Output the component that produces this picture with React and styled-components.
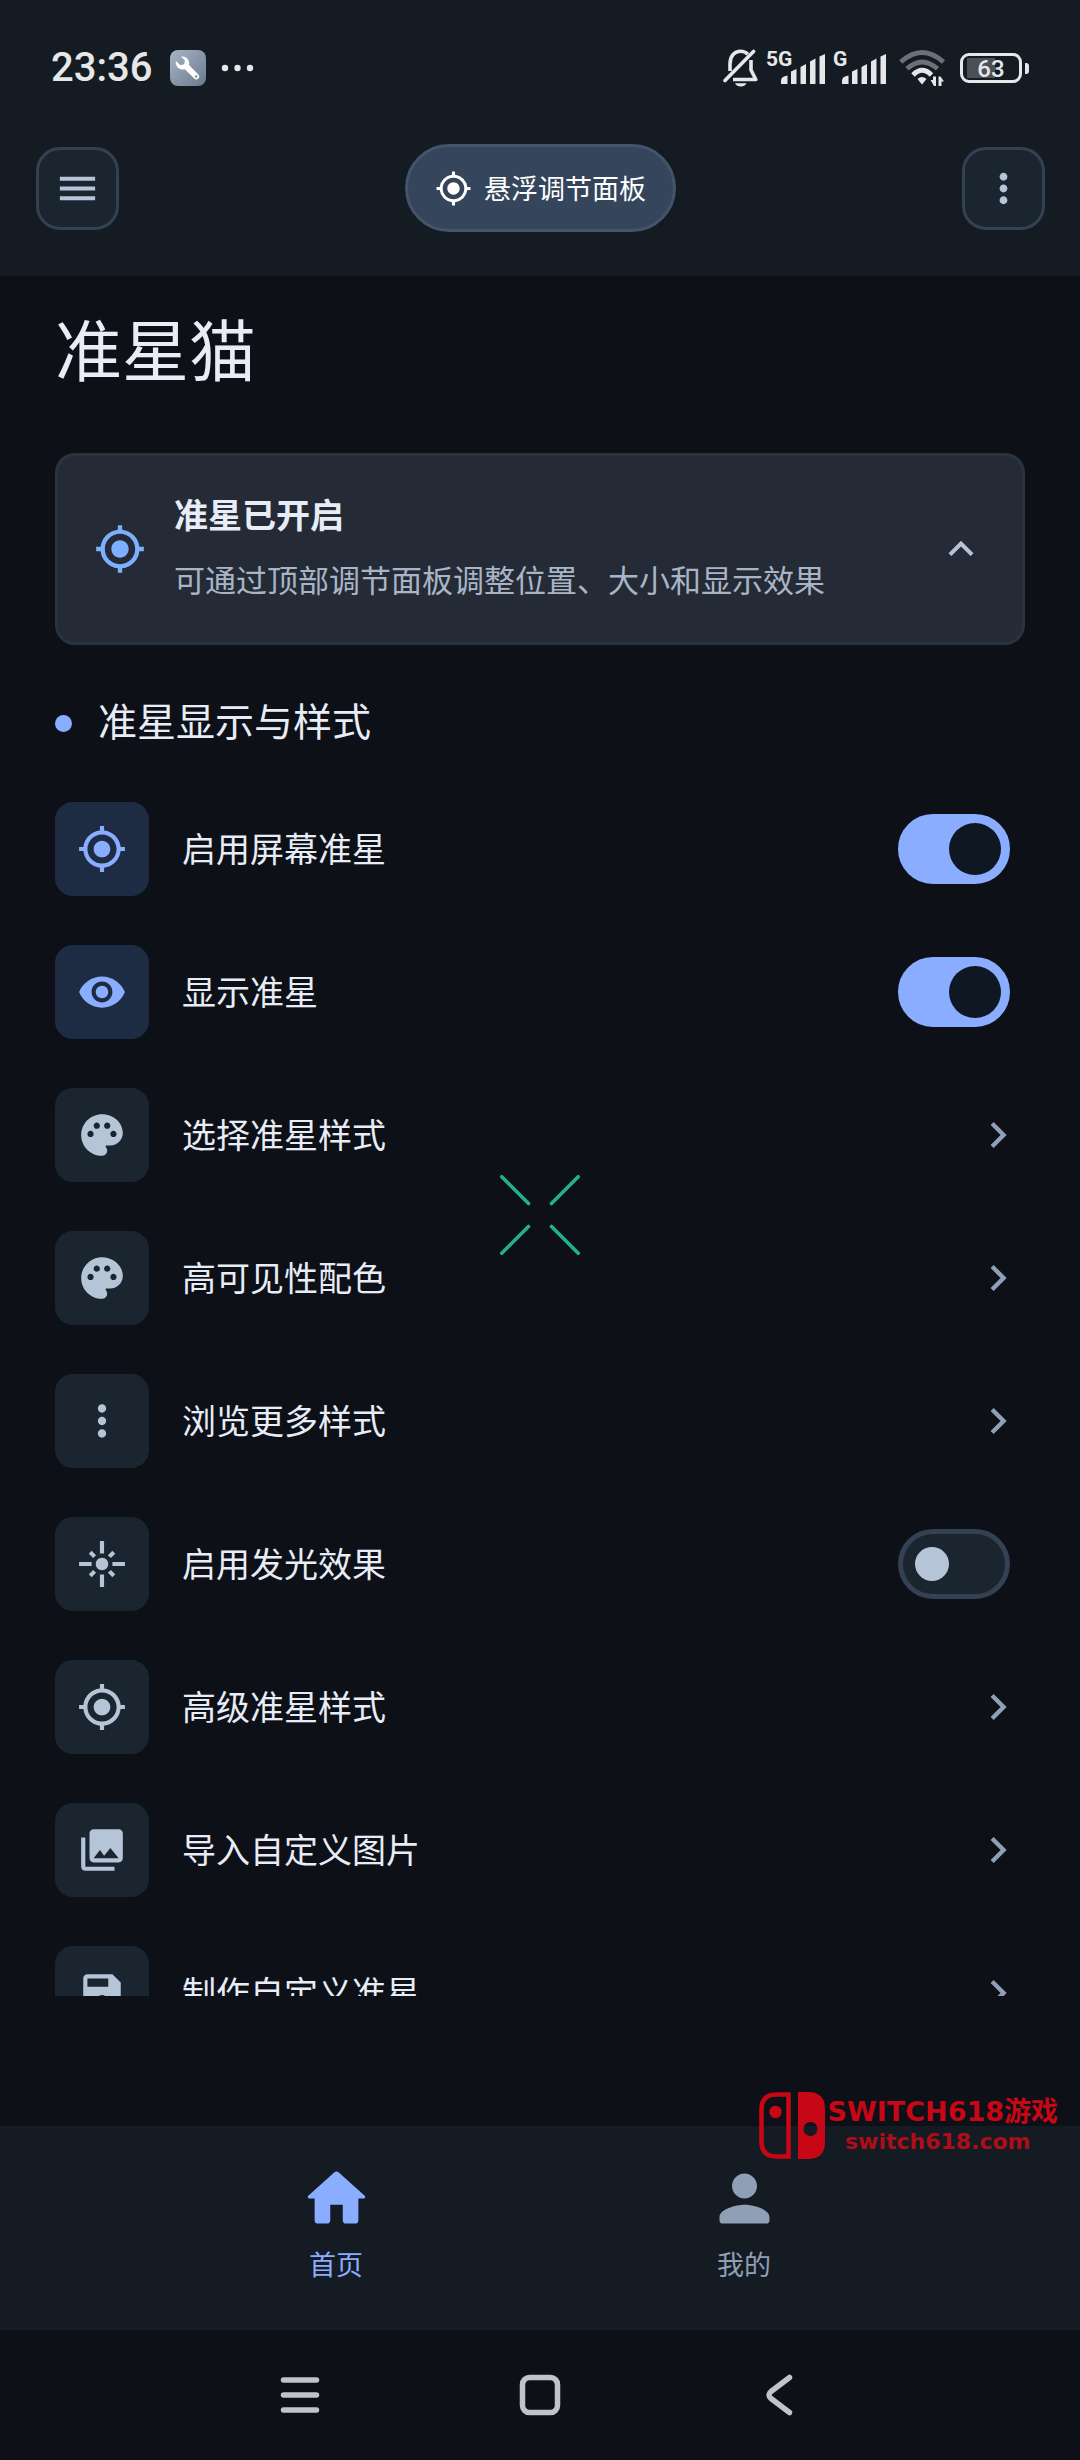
import React from 'react';
import styled, { createGlobalStyle } from 'styled-components';
import {
  MdChevronRight,
  MdExpandLess,
  MdFlare,
  MdMenu,
  MdMoreVert,
  MdMyLocation,
  MdPalette,
  MdPhotoLibrary,
  MdSave,
  MdVisibility,
} from 'react-icons/md';

// styles

const GlobalStyle = createGlobalStyle`
  :root {
    --bg: #0d1017;
    --bar: #151b22;
    --surface: #1b2530;
    --outline: #344153;
    --accent: #8aadff;
    --text: #e7ecf6;
    --text-soft: #b6c4d8;
    --text-dim: #8f9fb6;
    --system: #e6e7e9;
  }

  * {
    box-sizing: border-box;
  }

  body {
    margin: 0;
    background: var(--bg);
    color: var(--text);
    font-family: Roboto, 'Noto Sans CJK SC', sans-serif;
  }

  h1, h2, p {
    margin: 0;
    font-weight: 400;
  }

  button {
    margin: 0;
    padding: 0;
    border: none;
    background: none;
    color: inherit;
    font-family: inherit;
    cursor: pointer;
  }

  svg {
    display: block;
    flex-shrink: 0;
  }
`;

const Screen = styled.div`
  position: relative;
  display: flex;
  flex-direction: column;
  height: 100vh;
  overflow: hidden;
`;

const Header = styled.header`
  flex-shrink: 0;
  background: var(--bar);
`;

const StatusBar = styled.div`
  display: flex;
  align-items: center;
  justify-content: space-between;
  height: 136px;
  padding: 0 51px;
  color: var(--system);
`;

const StatusGroup = styled.div`
  display: flex;
  align-items: center;
  gap: ${(props) => props.$gap}px;
`;

const Clock = styled.time`
  font-size: 40px;
  font-weight: 500;
  line-height: 44px;
`;

const Battery = styled.div`
  display: flex;
  align-items: center;
  gap: 3px;

  &::after {
    content: '';
    width: 4px;
    height: 11px;
    border-radius: 0 3px 3px 0;
    background: var(--system);
  }
`;

const BatteryCell = styled.div`
  width: 62px;
  height: 30px;
  border: 3px solid var(--system);
  border-radius: 9px;
  background: linear-gradient(#4b4f56, #4b4f56) 4px 2px / 28px 20px no-repeat;
  font-size: 24px;
  font-weight: 500;
  line-height: 26px;
  text-align: center;
`;

const Toolbar = styled.div`
  display: flex;
  align-items: center;
  justify-content: space-between;
  padding: 8px 35px 44px 36px;
`;

const SquareButton = styled.button`
  display: flex;
  align-items: center;
  justify-content: center;
  width: 83px;
  height: 83px;
  border: 3px solid var(--outline);
  border-radius: 24px;
  background: var(--surface);
  color: var(--text-soft);
`;

const PanelButton = styled.button`
  display: flex;
  align-items: center;
  gap: 12px;
  height: 88px;
  padding: 0 27px;
  border: 3px solid #43546b;
  border-radius: 44px;
  background: #35455b;
  color: #fff;
  font-size: 27px;
  font-weight: 400;
  line-height: 36px;

  span {
    padding-top: 3px;
  }
`;

const Main = styled.main`
  display: flex;
  flex: 1;
  flex-direction: column;
  min-height: 0;
  padding: 39px 55px 130px;
`;

const Title = styled.h1`
  font-size: 67px;
  line-height: 76px;
`;

const StatusCard = styled.section`
  display: flex;
  align-items: center;
  gap: 28px;
  margin-top: 62px;
  padding: 38px 36px;
  border: 3px solid #2a343f;
  border-radius: 20px;
  background: #242b36;
  color: #7dafff;
`;

const CardText = styled.div`
  display: flex;
  flex: 1;
  flex-direction: column;
  gap: 22px;
  line-height: 44px;

  h2 {
    color: var(--text);
    font-size: 34px;
    font-weight: 700;
  }

  p {
    color: #a9b5c6;
    font-size: 31px;
  }
`;

const CollapseButton = styled.button`
  color: var(--text-soft);
`;

const SectionTitle = styled.h2`
  display: flex;
  align-items: center;
  gap: 26px;
  margin-top: 50px;
  font-size: 39px;
  line-height: 56px;

  &::before {
    content: '';
    width: 17px;
    height: 17px;
    border-radius: 50%;
    background: var(--accent);
  }
`;

const List = styled.ul`
  display: flex;
  flex: 1;
  flex-direction: column;
  gap: 49px;
  min-height: 0;
  margin: 51px 0 0;
  padding: 0;
  overflow-y: auto;
  list-style: none;
  scrollbar-width: none;
`;

const Row = styled.div`
  display: flex;
  align-items: center;
  gap: 33px;
  width: 100%;
  padding-right: ${(props) => (props.$toggle ? 15 : 1)}px;
  font-size: 34px;
  line-height: 48px;
  text-align: left;
  cursor: pointer;
`;

const RowIcon = styled.span`
  display: flex;
  flex-shrink: 0;
  align-items: center;
  justify-content: center;
  width: 94px;
  height: 94px;
  border-radius: 18px;
  background: ${(props) => (props.$active ? '#1e2c43' : '#1b2530')};
  color: ${(props) => (props.$active ? 'var(--accent)' : 'var(--text-soft)')};
`;

const RowLabel = styled.span`
  flex: 1;
  padding-top: 2px;
`;

const RowArrow = styled(MdChevronRight)`
  color: var(--text-dim);
`;

const Switch = styled.input`
  display: flex;
  align-items: center;
  width: 112px;
  height: 70px;
  margin: 0;
  padding: 0 12px;
  appearance: none;
  border: 5px solid var(--outline);
  border-radius: 35px;
  background: var(--surface);
  cursor: pointer;

  &::before {
    content: '';
    width: 34px;
    height: 34px;
    border-radius: 50%;
    background: var(--text-soft);
  }

  &:checked {
    justify-content: flex-end;
    padding: 0 4px;
    border-color: var(--accent);
    background: var(--accent);
  }

  &:checked::before {
    width: 52px;
    height: 52px;
    background: #0e1722;
  }
`;

const TabBar = styled.nav`
  display: grid;
  flex-shrink: 0;
  grid-template-columns: repeat(2, 1fr);
  height: 204px;
  padding: 35px 132px 0;
  background: var(--bar);
`;

const Tab = styled.a`
  display: flex;
  flex-direction: column;
  align-items: center;
  gap: 12px;
  color: ${(props) => (props.$active ? 'var(--accent)' : 'var(--text-dim)')};
  font-size: 27px;
  line-height: 36px;
  text-decoration: none;
`;

const SystemNav = styled.div`
  display: grid;
  flex-shrink: 0;
  grid-template-columns: repeat(3, 1fr);
  height: 130px;
  padding: 0 180px;
`;

const SystemButton = styled.button`
  display: flex;
  align-items: center;
  justify-content: center;
  color: #c2c3c7;
`;

// Drawn over the whole screen, never catches taps
const Crosshair = styled.svg`
  position: absolute;
  top: 1175px;
  left: 50%;
  margin-left: -40px;
  pointer-events: none;
`;

const Watermark = styled.div`
  position: absolute;
  right: 22px;
  bottom: 301px;
  display: flex;
  align-items: center;
  gap: 3px;
  color: #c70715;
  font-family: 'DejaVu Sans', 'Noto Sans CJK SC', sans-serif;
  font-weight: 700;
  text-align: center;
  pointer-events: none;
`;

const WatermarkName = styled.div`
  font-size: 27px;
  line-height: 32px;
`;

const WatermarkSite = styled.div`
  padding-right: 10px;
  color: #ad0e19;
  font-size: 22px;
  line-height: 28px;
`;

// drawings

const ToolIcon = () => (
  <svg width='36' height='36' viewBox='0 0 36 36'>
    <defs>
      <linearGradient id='tool' x1='0' y1='0' x2='1' y2='1'>
        <stop offset='0' stopColor='#a9b4c6' />
        <stop offset='1' stopColor='#6a7b8f' />
      </linearGradient>
    </defs>
    <rect width='36' height='36' rx='8' fill='url(#tool)' />
    <path
      d='M11 6.5a7 7 0 0 1 8 8.6L28.3 24.6a2.8 2.8 0 0 1-4 4L14.8 19.2a7 7 0 0 1-8.9-8.2l4.6 4.2 3.6-1 .9-3.6z'
      fill='#fff'
    />
    <circle cx='26.2' cy='26.5' r='1.3' fill='#7d8c9f' />
  </svg>
);

const DotsIcon = () => (
  <svg width='33' height='8' viewBox='0 0 33 8' fill='currentColor'>
    <circle cx='4' cy='4' r='3.2' />
    <circle cx='16.5' cy='4' r='3.2' />
    <circle cx='29' cy='4' r='3.2' />
  </svg>
);

const MutedIcon = () => (
  <svg width='35' height='38' viewBox='0 0 35 38' fill='none'>
    <g stroke='currentColor' strokeWidth='3.6'>
      <path d='M7 22v-7C7 7 11.5 2.3 17.5 2.3c3 0 5.500 1 7.300 3' />
      <path d='M28 11v10l4.800 9.500H10' strokeLinejoin='round' />
      <path d='M2 31.500L30.500 2.500' strokeLinecap='round' />
    </g>
    <path d='M12 34.300h11.500c-1.200 2.300-3 3.300-5.700 3.300s-4.600-1-5.800-3.300z' fill='currentColor' />
  </svg>
);

const SignalIcon = ({ label, width }) => (
  <svg width={width} height='48' viewBox={`0 -6 ${width} 48`} fill='currentColor'>
    <text x='0' y='16' fontSize='21' fontWeight='700' fontFamily='Roboto, sans-serif'>
      {label}
    </text>
    <g transform={`translate(${width - 44} 0)`}>
      <path d='M0 34v-3.500q0-4 6.500-5V34z' />
      <path d='M10 34V21.500l5.500-2.500V34z' />
      <path d='M19.500 34V17l5.500-3V34z' />
      <path d='M29 34V11.500l5.500-3V34z' />
      <path d='M38.500 34V6.500L44 4v30z' />
    </g>
  </svg>
);

const WifiIcon = () => (
  <svg width='48' height='38' viewBox='0 0 48 38' fill='none'>
    <g strokeWidth='4.800'>
      <path d='M1.800 13Q23 -6 44.500 13' stroke='#6d7076' />
      <path d='M8 19.800Q23 6 38.500 19.800' stroke='#6d7076' />
      <path d='M14 26Q23 16.500 32.500 26' stroke='currentColor' />
    </g>
    <path d='M18.500 30q4.500-4 9 0L23 35.500z' fill='currentColor' />
    <path
      d='M31.500 31h2.500v-3.500h3v9.500h-2zM45 32.500h-2.500v4.500h-3v-9.500h2z'
      fill='currentColor'
    />
  </svg>
);

const HomeIcon = () => (
  <svg width='75' height='75' viewBox='0 0 24 24' fill='currentColor'>
    <path d='M10 19v-5h4v5c0 .55.45 1 1 1h3c.55 0 1-.45 1-1v-7h1.700c.46 0 .68-.57.33-.87L12.670 3.600c-.38-.34-.96-.34-1.340 0l-8.360 7.530c-.34.3-.13.87.33.87H5v7c0 .55.45 1 1 1h3c.55 0 1-.45 1-1z' />
  </svg>
);

const PersonIcon = () => (
  <svg width='75' height='75' viewBox='0 0 24 24' fill='currentColor'>
    <path d='M12 12c2.210 0 4-1.790 4-4s-1.790-4-4-4-4 1.790-4 4 1.790 4 4 4zm0 2c-2.670 0-8 1.340-8 4v1c0 .55.45 1 1 1h14c.55 0 1-.45 1-1v-1c0-2.660-5.330-4-8-4z' />
  </svg>
);

const strokeProps = {
  width: 42,
  height: 42,
  viewBox: '0 0 42 42',
  fill: 'none',
  stroke: 'currentColor',
  strokeWidth: 5.5,
  strokeLinecap: 'round',
  strokeLinejoin: 'round',
};

const JoyLogo = () => (
  <svg width='66' height='67' viewBox='0 0 66 67'>
    <path
      d='M29.500 2.500V64.500H17.500Q2.500 64.500 2.500 49.500V17.500Q2.500 2.500 17.500 2.500z'
      fill='none'
      stroke='currentColor'
      strokeWidth='4.600'
    />
    <circle cx='16.500' cy='20' r='6.200' fill='currentColor' />
    <path
      d='M39 0H49Q66 0 66 17V50Q66 67 49 67H39zM51.500 30a7 7 0 1 0 .01 0z'
      fill='currentColor'
      fillRule='evenodd'
    />
  </svg>
);

const items = [
  { label: '启用屏幕准星', icon: MdMyLocation, toggle: true, on: true },
  { label: '显示准星', icon: MdVisibility, toggle: true, on: true },
  { label: '选择准星样式', icon: MdPalette },
  { label: '高可见性配色', icon: MdPalette },
  { label: '浏览更多样式', icon: MdMoreVert },
  { label: '启用发光效果', icon: MdFlare, toggle: true, on: false },
  { label: '高级准星样式', icon: MdMyLocation },
  { label: '导入自定义图片', icon: MdPhotoLibrary },
  { label: '制作自定义准星', icon: MdSave },
];

function SettingRow({ label, icon: Icon, toggle, on }) {
  const [checked, setChecked] = React.useState(Boolean(on));

  return (
    <li>
      <Row as={toggle ? 'label' : 'button'} $toggle={toggle}>
        <RowIcon $active={checked}>
          <Icon size={50} />
        </RowIcon>
        <RowLabel>{label}</RowLabel>
        {toggle ? (
          <Switch
            type='checkbox'
            role='switch'
            checked={checked}
            onChange={(e) => setChecked(e.target.checked)}
          />
        ) : (
          <RowArrow size={52} />
        )}
      </Row>
    </li>
  );
}

export default function App() {
  return (
    <Screen>
      <GlobalStyle />
      <Header>
        <StatusBar>
          <StatusGroup $gap={18}>
            <Clock>23:36</Clock>
            <StatusGroup $gap={15}>
              <ToolIcon />
              <DotsIcon />
            </StatusGroup>
          </StatusGroup>
          <StatusGroup $gap={13}>
            <StatusGroup $gap={8}>
              <MutedIcon />
              <SignalIcon label='5G' width={59} />
              <SignalIcon label='G' width={53} />
            </StatusGroup>
            <WifiIcon />
            <Battery>
              <BatteryCell>63</BatteryCell>
            </Battery>
          </StatusGroup>
        </StatusBar>
        <Toolbar>
          <SquareButton aria-label='菜单'>
            <MdMenu size={47} />
          </SquareButton>
          <PanelButton>
            <MdMyLocation size={37} />
            <span>悬浮调节面板</span>
          </PanelButton>
          <SquareButton aria-label='更多'>
            <MdMoreVert size={47} />
          </SquareButton>
        </Toolbar>
      </Header>

      <Main>
        <Title>准星猫</Title>
        <StatusCard>
          <MdMyLocation size={52} />
          <CardText>
            <h2>准星已开启</h2>
            <p>可通过顶部调节面板调整位置、大小和显示效果</p>
          </CardText>
          <CollapseButton aria-label='收起'>
            <MdExpandLess size={50} />
          </CollapseButton>
        </StatusCard>
        <SectionTitle>准星显示与样式</SectionTitle>
        <List>
          {items.map((item) => (
            <SettingRow key={item.label} {...item} />
          ))}
        </List>
      </Main>

      <TabBar>
        <Tab href='#home' $active>
          <HomeIcon />
          首页
        </Tab>
        <Tab href='#me'>
          <PersonIcon />
          我的
        </Tab>
      </TabBar>

      <SystemNav>
        <SystemButton aria-label='最近任务'>
          <svg {...strokeProps}>
            <path d='M4.500 6h33M4.500 21h33M4.500 36h33' />
          </svg>
        </SystemButton>
        <SystemButton aria-label='主屏幕'>
          <svg {...strokeProps}>
            <rect x='3.500' y='3.500' width='35' height='35' rx='7' />
          </svg>
        </SystemButton>
        <SystemButton aria-label='返回'>
          <svg {...strokeProps}>
            <path d='M30.500 3.500L12 17.500Q8 21 12 24.500L30.500 38.500' />
          </svg>
        </SystemButton>
      </SystemNav>

      <Crosshair
        width='80'
        height='80'
        viewBox='0 0 80 80'
        stroke='#22af8b'
        strokeWidth='3.600'
        strokeLinecap='round'
      >
        <path d='M1.800 1.800L28.500 28.500M78.200 1.800L51.500 28.500M1.800 78.200L28.500 51.500M78.200 78.200L51.500 51.500' />
      </Crosshair>

      <Watermark>
        <JoyLogo />
        <div>
          <WatermarkName>SWITCH618游戏</WatermarkName>
          <WatermarkSite>switch618.com</WatermarkSite>
        </div>
      </Watermark>
    </Screen>
  );
}
